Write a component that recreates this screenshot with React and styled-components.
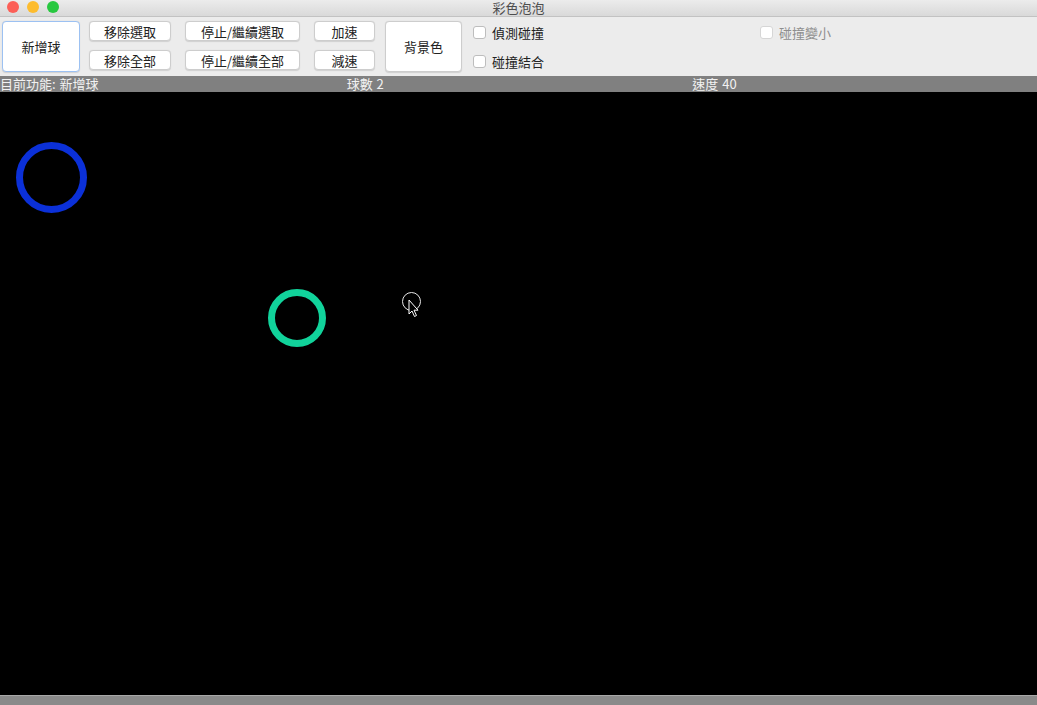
import React from "react";
import styled, { createGlobalStyle } from "styled-components";

const Global = createGlobalStyle`
  html, body { margin: 0; padding: 0; background: #000; overflow: hidden; }
  body { font-family: "Noto Sans CJK TC", "Noto Sans", sans-serif; }
`;

const Window = styled.div`
  width: 1037px;
  height: 705px;
  display: flex;
  flex-direction: column;
  background: #ececec;
`;

const TitleBar = styled.div`
  position: relative;
  height: 16px;
  flex: none;
  background: linear-gradient(#ececec, #d9d9d9);
  border-bottom: 1px solid #c2c2c2;
  display: flex;
  align-items: center;
  justify-content: center;
`;

const Lights = styled.div`
  position: absolute;
  left: 7px;
  top: 1px;
  display: flex;
  gap: 8px;
`;

const Light = styled.span`
  width: 12px;
  height: 12px;
  border-radius: 50%;
  background: ${(p) => p.$c};
`;

const Title = styled.div`
  font-size: 13px;
  line-height: 16px;
  color: #4d4d4d;
`;

const Toolbar = styled.div`
  height: 59px;
  flex: none;
  display: flex;
  align-items: flex-start;
  padding: 4px 0 0 2px;
  box-sizing: border-box;
  background: #ececec;
`;

const Column = styled.div`
  display: flex;
  flex-direction: column;
  gap: ${(p) => p.$gap || 9}px;
  margin-left: ${(p) => p.$ml || 0}px;
  margin-top: ${(p) => p.$mt || 0}px;
`;

const Button = styled.div`
  width: ${(p) => p.$w}px;
  height: ${(p) => p.$h || 20}px;
  margin-left: ${(p) => p.$ml || 0}px;
  box-sizing: border-box;
  background: #fff;
  border: 1px solid ${(p) => (p.$focus ? "#9cc1f2" : "#cdcdcd")};
  border-radius: 4px;
  box-shadow: 0 0.5px 1px rgba(0, 0, 0, 0.12);
  display: flex;
  align-items: center;
  justify-content: center;
  font-size: 13px;
  color: #222;
  white-space: nowrap;
`;

const Check = styled.label`
  display: flex;
  align-items: center;
  gap: 6px;
  height: 13px;
  font-size: 13px;
  color: ${(p) => (p.$disabled ? "#8e8e8e" : "#222")};
  white-space: nowrap;
`;

const Box = styled.span`
  width: 13px;
  height: 13px;
  box-sizing: border-box;
  background: #fff;
  border: 1px solid ${(p) => (p.$disabled ? "#d6d6d6" : "#bdbdbd")};
  border-radius: 3px;
`;

const StatusBar = styled.div`
  height: 16px;
  flex: none;
  background: #808080;
  display: grid;
  grid-template-columns: repeat(3, 1fr);
  color: #f2f2f2;
  font-size: 13px;
`;

const StatusItem = styled.div`
  display: block;
  height: 16px;
  line-height: 16px;
  padding-left: ${(p) => p.$pl || 0}px;
  white-space: nowrap;
  word-spacing: 1px;
`;

const Canvas = styled.div`
  flex: 1;
  position: relative;
  background: #000;
  overflow: hidden;
`;

const Ball = styled.div`
  position: absolute;
  box-sizing: border-box;
  border-radius: 50%;
  border: ${(p) => p.$stroke}px solid ${(p) => p.$color};
`;

const Cursor = styled.svg`
  position: absolute;
`;

const BottomBar = styled.div`
  height: 10px;
  flex: none;
  background: #8a8a8a;
  border-top: 1px solid #a8a8a8;
  box-sizing: border-box;
`;

const balls = [
  { x: 51, y: 85, r: 35.5, stroke: 7, color: "#0b30d8" },
  { x: 297, y: 226, r: 29, stroke: 7, color: "#11d39b" },
];

export default function App() {
  return (
    <>
      <Global />
      <Window>
        <TitleBar>
          <Lights>
            <Light $c="#fc5f57" />
            <Light $c="#fdbc2e" />
            <Light $c="#28c840" />
          </Lights>
          <Title>彩色泡泡</Title>
        </TitleBar>
        <Toolbar>
          <Button $w={78} $h={51} $focus>新增球</Button>
          <Column $ml={9}>
            <Button $w={82}>移除選取</Button>
            <Button $w={82}>移除全部</Button>
          </Column>
          <Column $ml={14}>
            <Button $w={115}>停止/繼續選取</Button>
            <Button $w={115}>停止/繼續全部</Button>
          </Column>
          <Column $ml={14}>
            <Button $w={61}>加速</Button>
            <Button $w={61}>減速</Button>
          </Column>
          <Button $w={77} $h={51} $ml={10}>背景色</Button>
          <Column $ml={11} $mt={5} $gap={16}>
            <Check><Box />偵測碰撞</Check>
            <Check><Box />碰撞結合</Check>
          </Column>
          <Column $ml={216} $mt={5}>
            <Check $disabled><Box $disabled />碰撞變小</Check>
          </Column>
        </Toolbar>
        <StatusBar>
          <StatusItem>目前功能: 新增球</StatusItem>
          <StatusItem $pl={1}>球數 2</StatusItem>
          <StatusItem $pl={1}>速度 40</StatusItem>
        </StatusBar>
        <Canvas>
          {balls.map((b, i) => (
            <Ball
              key={i}
              $stroke={b.stroke}
              $color={b.color}
              style={{
                left: b.x - b.r,
                top: b.y - b.r,
                width: b.r * 2,
                height: b.r * 2,
              }}
            />
          ))}
          <Cursor
            width="24"
            height="28"
            viewBox="0 0 24 28"
            style={{ left: 400, top: 198 }}
          >
            <circle cx="11.5" cy="11.5" r="9" fill="none" stroke="#e8e8e8" strokeWidth="1" />
            <path
              d="M9 10 L9 24 L12 21 L14.5 26.5 L16.5 25.5 L14 20.2 L18 20.2 Z"
              fill="#000"
              stroke="#fff"
              strokeWidth="1"
              strokeLinejoin="round"
            />
          </Cursor>
        </Canvas>
        <BottomBar />
      </Window>
    </>
  );
}
